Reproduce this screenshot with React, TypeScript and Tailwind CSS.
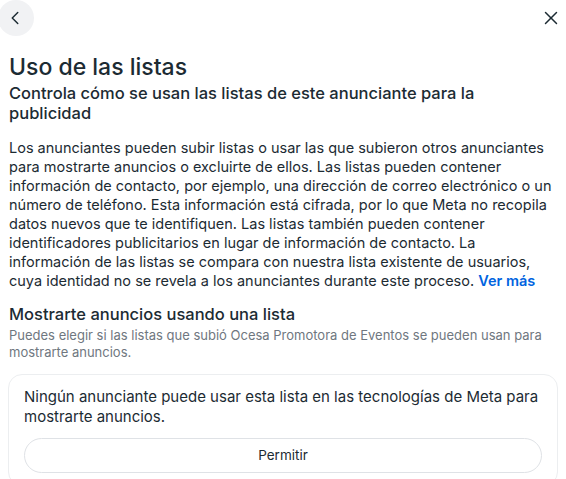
import { ChevronLeft, X } from "lucide-react";

export default function App() {
  return (
    <div className="w-[566px] h-[479px] overflow-hidden bg-white text-[#1c2b33] font-['Inter','Roboto',sans-serif]">
      <div className="flex items-center justify-between h-[36px]">
        <button className="w-[36px] h-[36px] -ml-[2px] -mt-[1px] rounded-full bg-[#f1f2f4] flex items-center justify-center">
          <ChevronLeft size={22} strokeWidth={1.6} className="-ml-[2px]" />
        </button>
        <button className="w-[24px] h-[24px] mr-[3px] flex items-center justify-center">
          <X size={22} strokeWidth={1.6} />
        </button>
      </div>

      <div className="pl-[9px] pr-[8px] pt-[17px]">
        <h1 className="text-[23px] leading-[28px] font-medium">Uso de las listas</h1>
        <h2 className="text-[16.5px] leading-[20px] font-medium mt-[2px]">
          Controla cómo se usan las listas de este anunciante para la publicidad
        </h2>
        <p className="text-[14.5px] leading-[19px] mt-[15px] -mr-[4px]">
          Los anunciantes pueden subir listas o usar las que subieron otros anunciantes<br />
          para mostrarte anuncios o excluirte de ellos. Las listas pueden contener<br />
          información de contacto, por ejemplo, una dirección de correo electrónico o un<br />
          número de teléfono. Esta información está cifrada, por lo que Meta no recopila<br />
          datos nuevos que te identifiquen. Las listas también pueden contener<br />
          identificadores publicitarios en lugar de información de contacto. La<br />
          información de las listas se compara con nuestra lista existente de usuarios,<br />
          cuya identidad no se revela a los anunciantes durante este proceso. <span className="text-[#0064e0] font-semibold">Ver más</span>
        </p>

        <h3 className="text-[16.5px] leading-[22px] font-medium mt-[13px]">Mostrarte anuncios usando una lista</h3>
        <p className="text-[13px] leading-[17px] text-[#6f7780] mt-[2px]">
          Puedes elegir si las listas que subió Ocesa Promotora de Eventos se pueden usan para mostrarte anuncios.
        </p>

        <div className="mt-[13px] -ml-[1px] border border-[#eceef0] rounded-[14px] pl-[15px] pr-[15px] pt-[12px] pb-[12px]">
          <p className="text-[15px] leading-[20px]">
            Ningún anunciante puede usar esta lista en las tecnologías de Meta para mostrarte anuncios.
          </p>
          <button className="mt-[11px] w-full h-[35px] rounded-full border border-[#dfe2e6] text-[13.5px] flex items-center justify-center">
            Permitir
          </button>
        </div>
      </div>
    </div>
  );
}
